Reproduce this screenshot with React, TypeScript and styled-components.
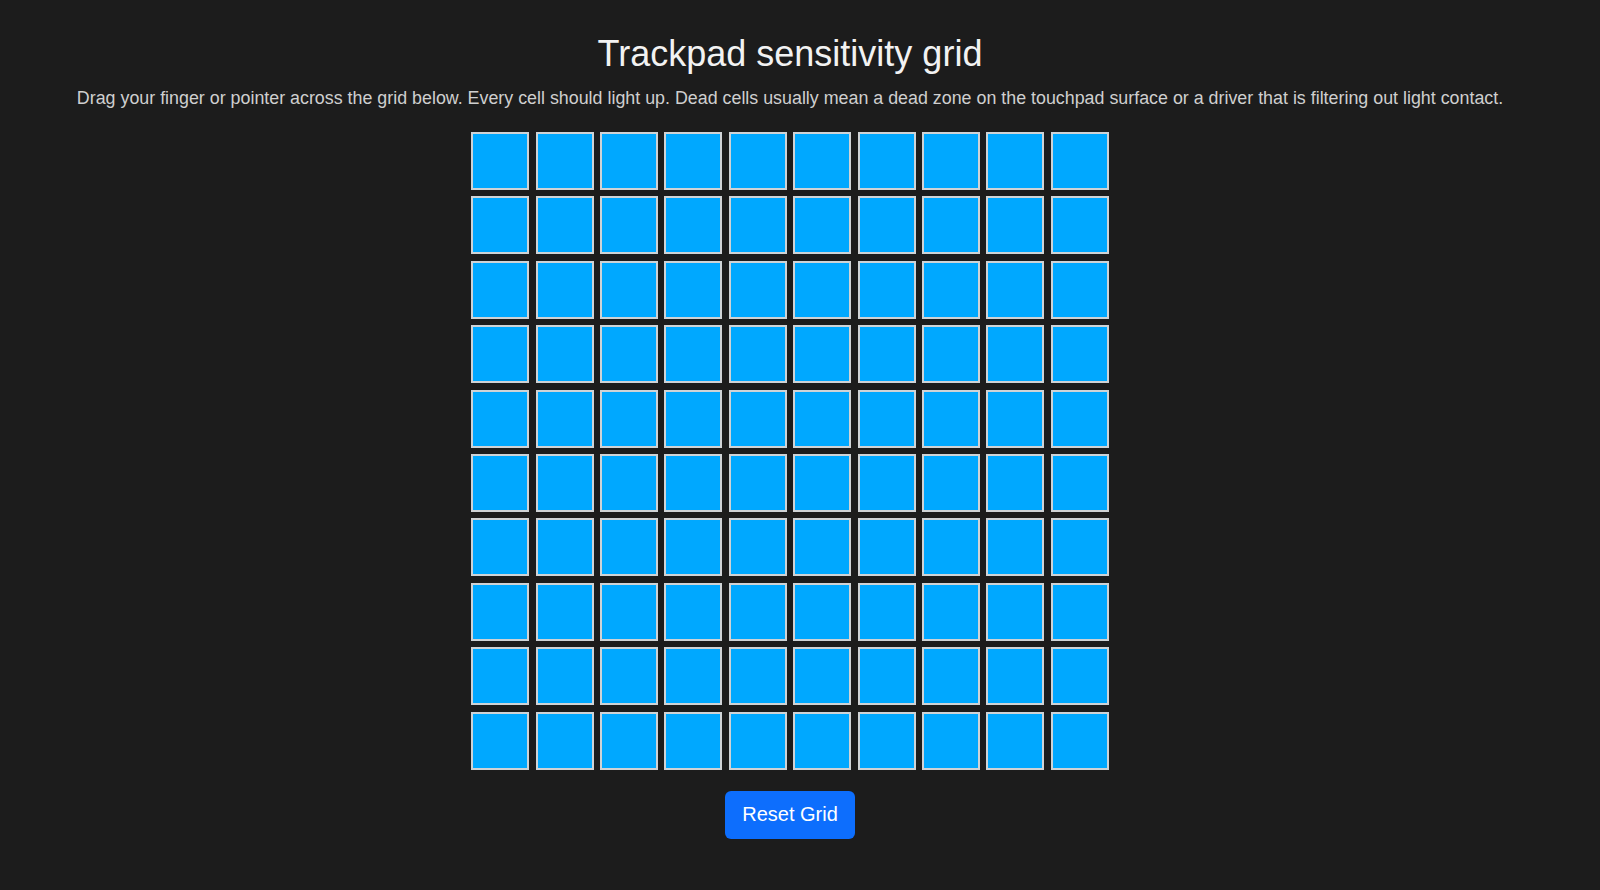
import React, { useState } from 'react';
import styled, { createGlobalStyle } from 'styled-components';

const ROWS = 10;
const COLS = 10;

const GlobalStyle = createGlobalStyle`
  html, body {
    margin: 0;
    padding: 0;
    background: #1c1c1c;
  }
  body {
    font-family: 'Liberation Sans', Arial, sans-serif;
    color: #f0f0f0;
  }
`;

const App = () => {
  const [lit, setLit] = useState<boolean[]>(() =>
    Array(ROWS * COLS).fill(true)
  );

  const lightUp = (idx: number) => {
    setLit((prev) => {
      if (prev[idx]) return prev;
      const next = [...prev];
      next[idx] = true;
      return next;
    });
  };

  const reset = () => setLit(Array(ROWS * COLS).fill(false));

  return (
    <>
      <GlobalStyle />
      <Page>
        <Title>Trackpad sensitivity grid</Title>
        <Description>
          Drag your finger or pointer across the grid below. Every cell should
          light up. Dead cells usually mean a dead zone on the touchpad surface
          or a driver that is filtering out light contact.
        </Description>
        <Grid>
          {lit.map((on, idx) => (
            <Cell
              key={idx}
              $lit={on}
              onPointerEnter={() => lightUp(idx)}
              onPointerDown={() => lightUp(idx)}
            />
          ))}
        </Grid>
        <ResetButton onClick={reset}>Reset Grid</ResetButton>
      </Page>
    </>
  );
};

export default App;

const Page = styled.div`
  display: flex;
  flex-direction: column;
  align-items: center;
  min-height: 100vh;
  box-sizing: border-box;
  padding: 33px 20px 0 0;
`;

const Title = styled.h1`
  margin: 0;
  font-size: 36px;
  font-weight: 400;
  line-height: 41px;
  color: #f2f2f2;
`;

const Description = styled.p`
  margin: 14px 0 0;
  font-size: 17.85px;
  line-height: 21px;
  color: #cfcfcf;
  text-align: center;
`;

const Grid = styled.div`
  margin-top: 23px;
  display: grid;
  grid-template-columns: repeat(${COLS}, 58px);
  grid-auto-rows: 58px;
  gap: 6.4px;
  touch-action: none;
`;

const Cell = styled.div<{ $lit: boolean }>`
  box-sizing: border-box;
  border: 2px solid #cfd3d6;
  background: ${(p) => (p.$lit ? '#00a8ff' : '#333')};
`;

const ResetButton = styled.button`
  margin-top: 21px;
  height: 48px;
  padding: 0 17px;
  border: none;
  border-radius: 6px;
  background: #0d6efd;
  color: #ffffff;
  font-family: 'Liberation Sans', Arial, sans-serif;
  font-size: 20px;
  cursor: pointer;
`;
